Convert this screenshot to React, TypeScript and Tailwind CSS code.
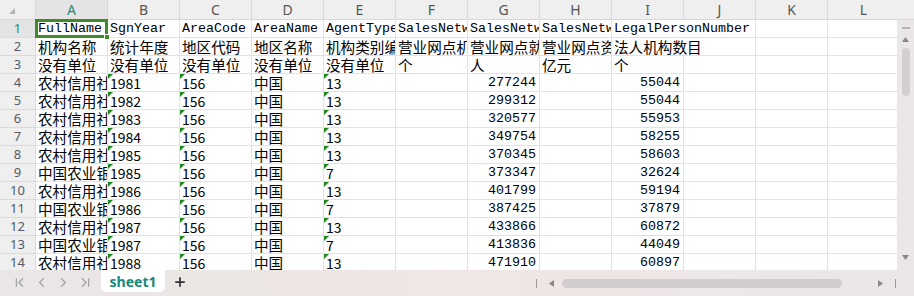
import { ChevronFirst, ChevronLeft, ChevronRight, ChevronLast, Plus } from 'lucide-react';

type Cell = { t?: string; cjk?: boolean; right?: boolean; mark?: boolean; spill?: boolean; sans?: boolean };

const cols = ['A', 'B', 'C', 'D', 'E', 'F', 'G', 'H', 'I', 'J', 'K', 'L'];

const data: [string, string, string, string, string][] = [
  ['农村信用社', '1981', '13', '277244', '55044'],
  ['农村信用社', '1982', '13', '299312', '55044'],
  ['农村信用社', '1983', '13', '320577', '55953'],
  ['农村信用社', '1984', '13', '349754', '58255'],
  ['农村信用社', '1985', '13', '370345', '58603'],
  ['中国农业银行', '1985', '7', '373347', '32624'],
  ['农村信用社', '1986', '13', '401799', '59194'],
  ['中国农业银行', '1986', '7', '387425', '37879'],
  ['农村信用社', '1987', '13', '433866', '60872'],
  ['中国农业银行', '1987', '7', '413836', '44049'],
  ['农村信用社', '1988', '13', '471910', '60897'],
];

const rows: Cell[][] = [
  [
    { t: 'FullName' }, { t: 'SgnYear' }, { t: 'AreaCode' }, { t: 'AreaName' }, { t: 'AgentType' },
    { t: 'SalesNetworkNumber' }, { t: 'SalesNetworkEmployee' }, { t: 'SalesNetworkAsset' },
    { t: 'LegalPersonNumber', spill: true }, {}, {}, {},
  ],
  [
    { t: '机构名称', cjk: true }, { t: '统计年度', cjk: true }, { t: '地区代码', cjk: true }, { t: '地区名称', cjk: true },
    { t: '机构类别编码', cjk: true }, { t: '营业网点机构数', cjk: true }, { t: '营业网点就业人数', cjk: true },
    { t: '营业网点资产总额', cjk: true }, { t: '法人机构数目', cjk: true, spill: true }, {}, {}, {},
  ],
  [
    { t: '没有单位', cjk: true }, { t: '没有单位', cjk: true }, { t: '没有单位', cjk: true }, { t: '没有单位', cjk: true },
    { t: '没有单位', cjk: true }, { t: '个', cjk: true }, { t: '人', cjk: true }, { t: '亿元', cjk: true },
    { t: '个', cjk: true }, {}, {}, {},
  ],
  ...data.map(([name, year, type, emp, legal]) => [
    { t: name, cjk: true },
    { t: year, sans: true, mark: true },
    { t: '156', sans: true, mark: true },
    { t: '中国', cjk: true },
    { t: type, sans: true, mark: true },
    {},
    { t: emp, right: true },
    {},
    { t: legal, right: true },
    {}, {}, {},
  ]),
];

function GridCell({ c, selected }: { c: Cell; selected?: boolean }) {
  const font = c.cjk
    ? "font-['Microsoft_YaHei','Noto_Sans_CJK_SC',sans-serif] text-[14.6px]"
    : c.sans
      ? "font-['Noto_Sans_CJK_SC',sans-serif] text-[14px]"
      : "font-['Liberation_Mono',monospace] text-[13.33px]";
  const open = c.spill || selected;
  return (
    <div
      className={`relative w-[72px] shrink-0 h-full border-b border-[#e2e2e2] flex items-center whitespace-nowrap text-black leading-none ${
        open ? 'z-10 overflow-visible' : 'overflow-hidden'
      } ${c.spill ? '' : 'border-r'} ${c.right ? 'justify-end pr-[3px]' : 'pl-[2px]'} ${font}`}
    >
      {c.mark && (
        <span className="absolute left-0 top-0 w-0 h-0 border-t-[5px] border-r-[5px] border-t-[#1d8a1d] border-r-transparent" />
      )}
      <span className="pt-[1px]">{c.t}</span>
      {selected && (
        <>
          <span className="absolute -left-[1px] -top-[1px] w-[73px] h-[19px] border-[3px] border-[#3f8a2a]" />
          <span className="absolute -right-[3px] -bottom-[3px] w-[6px] h-[6px] bg-[#3f8a2a] border border-white" />
        </>
      )}
    </div>
  );
}

export default function App() {
  return (
    <div className="w-[914px] h-[296px] overflow-hidden bg-white flex flex-col font-['Noto_Sans',sans-serif] select-none">
      <div className="flex h-[270px]">
        <div className="w-[897px] overflow-hidden">
          {/* column header */}
          <div className="flex h-[20px] bg-[#efefef] border-b border-[#d8d8d8]">
            <div className="w-[36px] shrink-0 border-r border-[#dadada] flex items-end justify-end pr-[20px] pb-[5px]">
              <svg width="6" height="6" viewBox="0 0 6 6">
                <polygon points="6,0 6,6 0,6" fill="#b5b5b5" />
              </svg>
            </div>
            {cols.map((l) => (
              <div
                key={l}
                className={`w-[72px] shrink-0 border-r border-[#dadada] flex items-center justify-center text-[14px] ${
                  l === 'A' ? 'bg-[#e4e4e4] text-[#1d8c73]' : 'text-[#555]'
                }`}
              >
                {l}
              </div>
            ))}
          </div>
          {rows.map((r, i) => (
            <div key={i} className="flex h-[18px]">
              <div
                className={`w-[36px] shrink-0 border-r border-b border-[#dadada] flex items-center justify-center text-[13px] ${
                  i === 0 ? 'bg-[#e4e4e4] text-[#1d8c73]' : 'bg-[#efefef] text-[#555a66]'
                }`}
              >
                {i + 1}
              </div>
              {r.map((c, j) => (
                <GridCell key={j} c={c} selected={i === 0 && j === 0} />
              ))}
            </div>
          ))}
        </div>
        {/* vertical scrollbar */}
        <div className="w-[17px] flex flex-col">
          <div className="h-[20px] bg-[#efefef] border-b border-[#d8d8d8]" />
          <div className="flex-1 bg-[#ece7e7] flex flex-col items-center">
            <span className="mt-[7px] w-[8px] h-[2px] bg-[#b3b3b3]" />
            <svg className="mt-[8px]" width="7" height="5" viewBox="0 0 7 5">
              <polygon points="3.5,0 7,5 0,5" fill="#888" />
            </svg>
            <span className="mt-[6px] w-[8px] h-[48px] rounded-full bg-[#d3cfcf]" />
            <svg className="mt-auto mb-[10px]" width="7" height="5" viewBox="0 0 7 5">
              <polygon points="0,0 7,0 3.5,5" fill="#888" />
            </svg>
          </div>
        </div>
      </div>
      {/* bottom bar */}
      <div className="h-[26px] bg-gradient-to-r from-[#eae6e6] via-[#efe6e5] to-[#ebe7e7] flex items-start">
        <div className="flex items-center h-[24px] gap-[7px] pl-[12px] text-[#a2a2a2]">
          <ChevronFirst size={15} strokeWidth={2} />
          <ChevronLeft size={15} strokeWidth={2} />
          <ChevronRight size={15} strokeWidth={2} />
          <ChevronLast size={15} strokeWidth={2} />
        </div>
        <div className="ml-[8px] w-[64px] h-[22px] bg-white rounded-b-[5px] flex items-center justify-center text-[14px] font-bold text-[#168a7c]">
          sheet1
        </div>
        <div className="ml-[8px] h-[24px] flex items-center text-[#333]">
          <Plus size={14} strokeWidth={3} />
        </div>
        <div className="ml-auto flex items-center h-[26px] pr-[18px]">
          <span className="w-[1px] h-[9px] bg-[#999]" />
          <svg className="ml-[12px]" width="5" height="7" viewBox="0 0 5 7">
            <polygon points="5,0 5,7 0,3.5" fill="#888" />
          </svg>
          <span className="ml-[8px] w-[280px] h-[9px] rounded-full bg-[#d2cdcd]" />
          <svg className="ml-[36px]" width="5" height="7" viewBox="0 0 5 7">
            <polygon points="0,0 5,3.5 0,7" fill="#888" />
          </svg>
          <span className="ml-[12px] w-[1px] h-[9px] bg-[#999]" />
        </div>
      </div>
    </div>
  );
}
